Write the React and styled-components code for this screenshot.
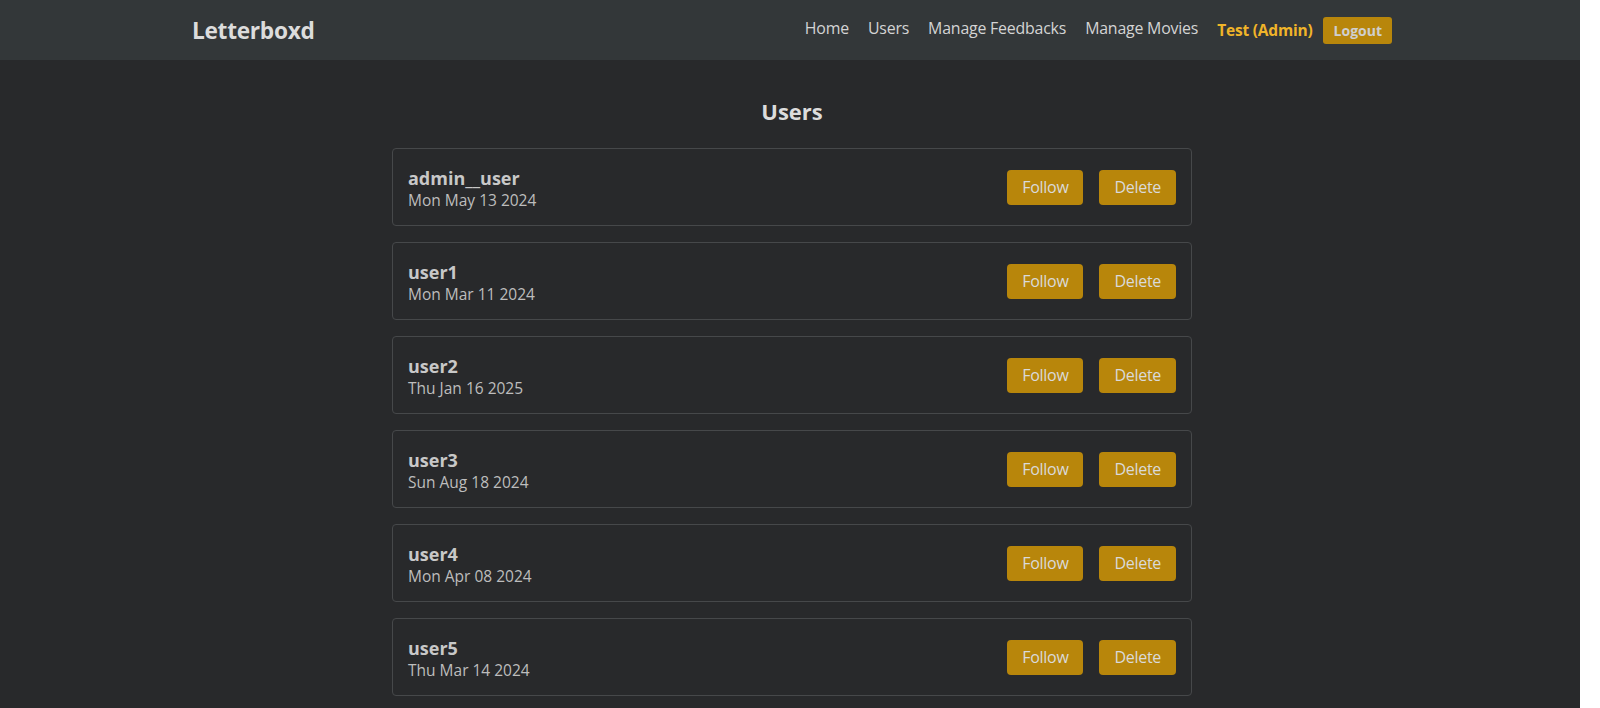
import styled, { createGlobalStyle } from "styled-components";

const users = [
  { name: "admin__user", joined: "Mon May 13 2024" },
  { name: "user1", joined: "Mon Mar 11 2024" },
  { name: "user2", joined: "Thu Jan 16 2025" },
  { name: "user3", joined: "Sun Aug 18 2024" },
  { name: "user4", joined: "Mon Apr 08 2024" },
  { name: "user5", joined: "Thu Mar 14 2024" },
];

export default function App() {
  return (
    <>
      <GlobalStyle />
      <Page>
        <Navbar>
          <NavInner>
            <Brand>Letterboxd</Brand>
            <NavLinks>
              <NavLink>Home</NavLink>
              <NavLink>Users</NavLink>
              <NavLink>Manage Feedbacks</NavLink>
              <NavLink>Manage Movies</NavLink>
              <CurrentUser>Test (Admin)</CurrentUser>
              <LogoutButton>Logout</LogoutButton>
            </NavLinks>
          </NavInner>
        </Navbar>
        <Main>
          <Title>Users</Title>
          <List>
            {users.map((u) => (
              <Card key={u.name}>
                <Info>
                  <Name>{u.name}</Name>
                  <Joined>{u.joined}</Joined>
                </Info>
                <Actions>
                  <Button>Follow</Button>
                  <Button>Delete</Button>
                </Actions>
              </Card>
            ))}
          </List>
        </Main>
      </Page>
    </>
  );
}

const GlobalStyle = createGlobalStyle`
  html, body {
    margin: 0;
    background: #ffffff;
    font-family: "Open Sans", "Noto Sans", sans-serif;
  }
  * { box-sizing: border-box; }
`;

const Page = styled.div`
  width: calc(100% - 20px);
  min-height: 100vh;
  padding-left: 4px;
  background: #28292b;
`;

const Navbar = styled.nav`
  background: #333739;
  height: 60px;
  margin-left: -4px;
  padding-left: 4px;
`;

const NavInner = styled.div`
  max-width: 1200px;
  height: 100%;
  margin: 0 auto;
  display: flex;
  align-items: center;
  justify-content: space-between;
`;

const Brand = styled.a`
  color: #dcdcdc;
  font-size: 22.7px;
  font-weight: 700;
  letter-spacing: -0.3px;
`;

const NavLinks = styled.div`
  display: flex;
  align-items: center;
  gap: 19px;
`;

const NavLink = styled.a`
  color: #d4d4d4;
  font-size: 15.9px;
  margin-top: -4px;
  letter-spacing: -0.2px;
`;

const CurrentUser = styled.span`
  color: #f0b429;
  font-size: 15.5px;
  font-weight: 700;
  letter-spacing: -0.2px;
`;

const LogoutButton = styled.button`
  background: #b8860b;
  color: #cfcfcf;
  border: none;
  border-radius: 3px;
  height: 27px;
  padding: 0 10px 0 11px;
  font-family: inherit;
  font-size: 14px;
  font-weight: 700;
  margin-left: -9px;
`;

const Main = styled.main`
  width: 800px;
  margin: 0 auto;
  padding-top: 36px;
`;

const Title = styled.h2`
  margin: 0 0 22px;
  text-align: center;
  color: #dcdcdc;
  font-size: 22px;
  font-weight: 700;
`;

const List = styled.div`
  display: flex;
  flex-direction: column;
  gap: 16px;
`;

const Card = styled.div`
  height: 78px;
  border: 1px solid #46484a;
  border-radius: 4px;
  padding: 0 15px;
  display: flex;
  align-items: center;
  justify-content: space-between;
`;

const Info = styled.div`
  display: flex;
  flex-direction: column;
  margin-top: 5px;
`;

const Name = styled.span`
  color: #c8c8c8;
  font-size: 18px;
  font-weight: 700;
  line-height: 22px;
`;

const Joined = styled.span`
  color: #bdbdbd;
  font-size: 15.5px;
  line-height: 23px;
`;

const Actions = styled.div`
  display: flex;
  gap: 16px;
`;

const Button = styled.button`
  background: #b8860b;
  color: #dadada;
  border: none;
  border-radius: 4px;
  height: 35px;
  padding: 0 15px;
  font-family: inherit;
  font-size: 16px;
  letter-spacing: -0.3px;
`;
